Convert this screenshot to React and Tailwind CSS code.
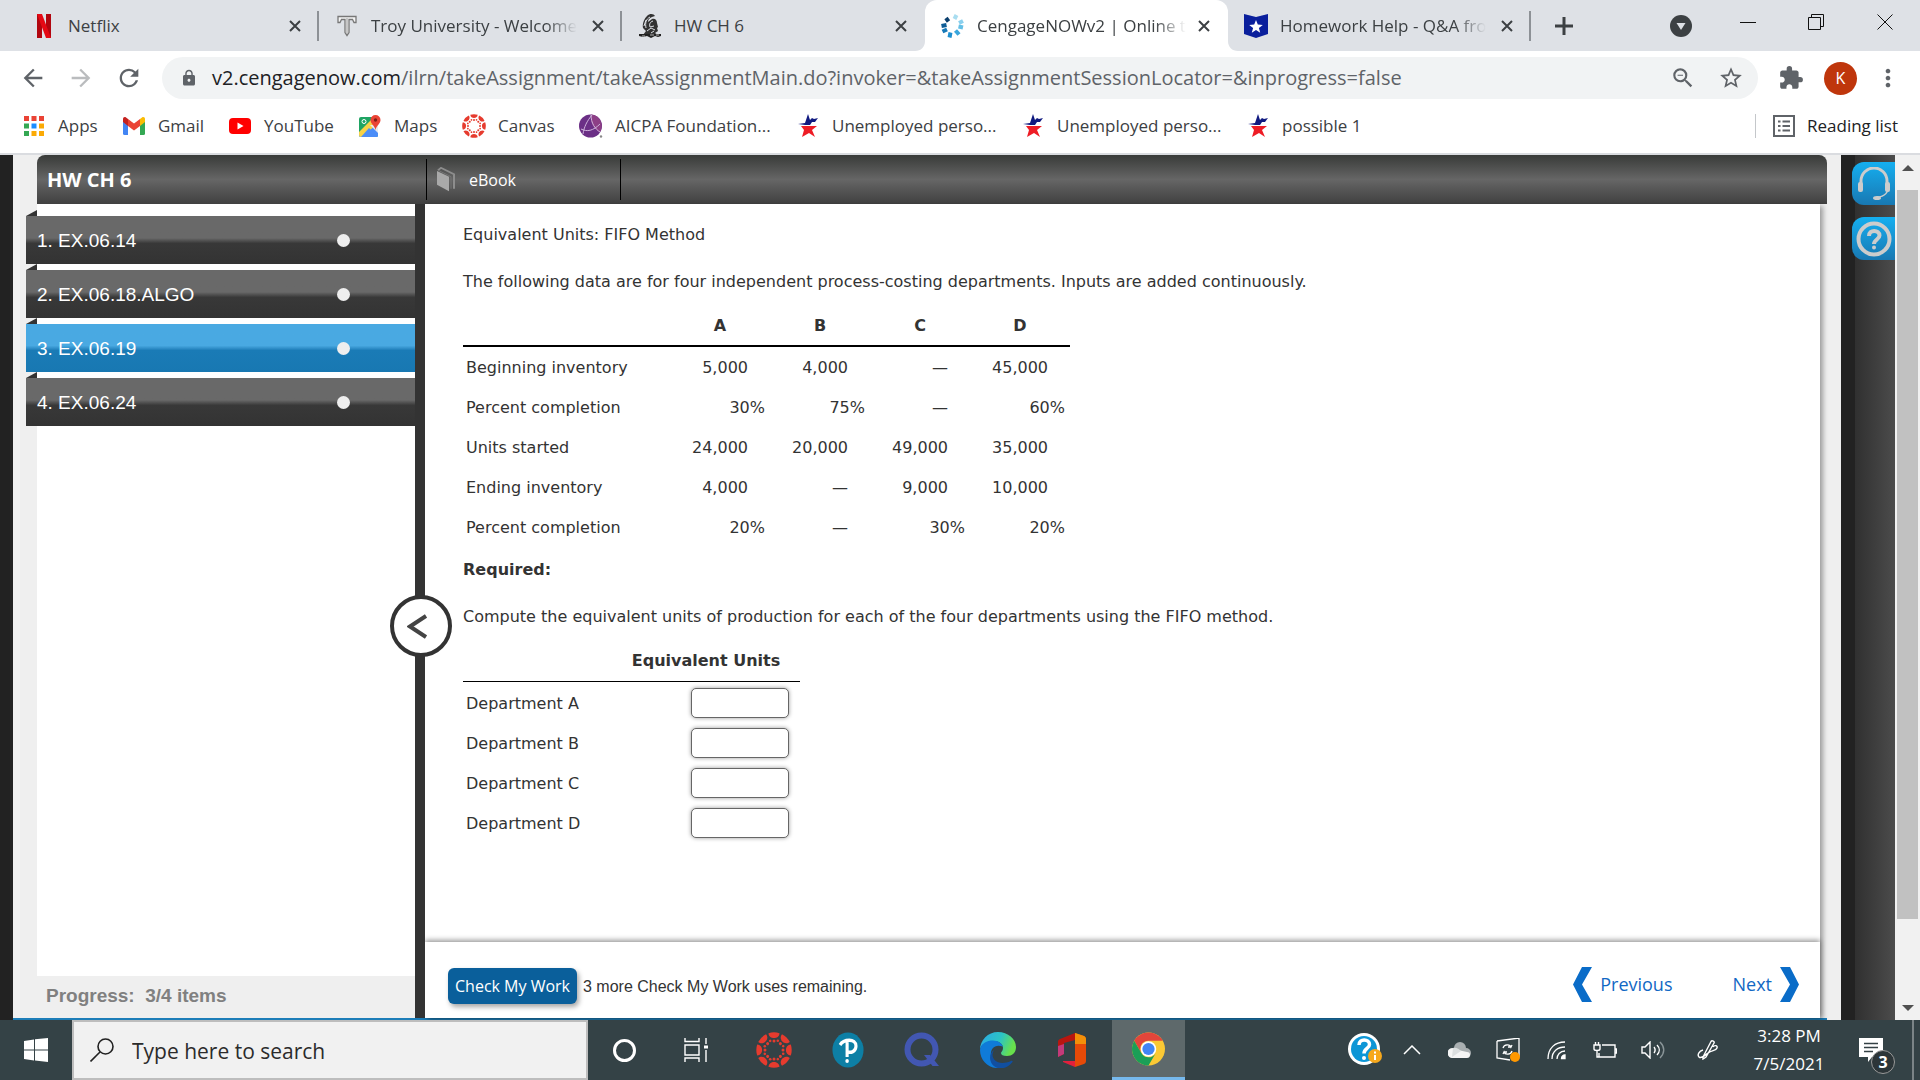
import React from 'react';
import {
  MdArrowBack,
  MdArrowForward,
  MdRefresh,
  MdLock,
  MdZoomOut,
  MdStarBorder,
  MdExtension,
  MdMoreVert,
} from 'react-icons/md';

/* ---------- Site icons ---------- */

const NetflixIcon = () => (
  <svg viewBox="0 0 14 24" className="w-[14px] h-6">
    <path d="M0 0h5v24H0zM9 0h5v24H9z" fill="#b1060f" />
    <path d="M0 0h5l9 24H9z" fill="#e50914" />
  </svg>
);

const TroyIcon = () => (
  <svg viewBox="0 0 20 22" className="w-5 h-[22px]">
    <path
      d="M1 1.500h18v6h-2l-1.500-3H12v13L10 20.500 8 17.500v-13H4.500L3 7.500H1z"
      fill="#f4f4f4"
      stroke="#777"
      strokeWidth="1.300"
    />
    <path d="M10 3v16" stroke="#999" />
  </svg>
);

const TrojanIcon = () => (
  <svg viewBox="0 0 24 24" className="w-6 h-6">
    <path d="M9 2c3-3 7-2 8 0l-3 1c-3 1-4 3-4 5l4-3c3-1 5 1 5 4l1 4-1 1 1 3-3 2 3 2H5l3-4-3-3c-1-4 1-9 4-12z" fill="#333" />
    <path d="M12 3C8 5 7 9 8 14M15 7c-3 1-4 3-3 6l4-1M9 17l4-3 4 2M13 19l3-2M8 6l-2 6" stroke="#dee1e6" strokeWidth="1" fill="none" />
    <path d="M1 20h22v2l-3 1-3-1-4 2-4-2-4 1-4-1z" fill="#222" />
    <path d="M4 22h3M12 21h4M18 21h3" stroke="#ddd" strokeWidth=".8" />
  </svg>
);

const CengageIcon = () => (
  <svg viewBox="0 0 24 24" className="w-6 h-6">
    <g strokeWidth="4" strokeLinecap="butt">
      <path d="M13.500 5l2-4" stroke="#a9ddf0" />
      <path d="M18 9l4-2" stroke="#8ad0ee" />
      <path d="M17.500 12.500l4.500 1" stroke="#63bfe6" />
      <path d="M14.500 16.500l3.500 4" stroke="#3aa6dc" />
      <path d="M9.500 18.500l-1 5" stroke="#1d8fd0" />
      <path d="M6 15.500l-4.500 2" stroke="#1679b8" />
      <path d="M5.500 11l-5 1" stroke="#0e5c95" />
      <path d="M7.500 7.500L5 4" stroke="#0b3f6d" />
    </g>
  </svg>
);

const BadgeIcon = () => (
  <svg viewBox="0 0 24 24" className="w-6 h-6">
    <path d="M0 0l12 3 12-3v20l-12 4-12-4z" fill="#0a1f9c" />
    <path d="M12 6l1.800 4.600 5 .3-3.900 3.100 1.300 4.800-4.200-2.700-4.200 2.700 1.300-4.800-3.900-3.100 5-.3z" fill="#fff" />
  </svg>
);

const AppsIcon = () => (
  <svg viewBox="0 0 20 20" className="w-5 h-5">
    <path d="M0 0h5v5H0zM7.500 0h5v5h-5zM15 0h5v5h-5z" fill="#ea4335" />
    <path d="M0 7.500h5v5H0zM0 15h5v5H0z" fill="#34a853" />
    <path d="M7.500 7.500h5v5h-5z" fill="#1a8cff" />
    <path d="M15 7.500h5v5h-5zM7.500 15h5v5h-5zM15 15h5v5h-5z" fill="#fbaa05" />
  </svg>
);

const GmailIcon = () => (
  <svg viewBox="0 0 22 18" className="w-[22px] h-[18px]">
    <path d="M0 3h5v15H1.500A1.500 1.500 0 010 16.500z" fill="#4285f4" />
    <path d="M17 3h5v13.500a1.500 1.500 0 01-1.500 1.500H17z" fill="#34a853" />
    <path d="M17 2l2-1.500c1.500-1 3 0 3 1.500v3l-5 4z" fill="#fbbc04" />
    <path d="M5 2L3 .500C1.500-.500 0 .500 0 2v3l5 4z" fill="#c5221f" />
    <path d="M5 2l6 4.500L17 2v7l-6 4.500L5 9z" fill="#ea4335" />
  </svg>
);

const YouTubeIcon = () => (
  <svg viewBox="0 0 22 16" className="w-[22px] h-4">
    <rect width="22" height="16" rx="4" fill="#f00" />
    <path d="M8.500 4.500v7l6-3.500z" fill="#fff" />
  </svg>
);

const MapsIcon = () => (
  <svg viewBox="0 0 22 22" className="w-[22px] h-[22px]">
    <rect y="2" width="19" height="20" rx="2" fill="#1fa463" />
    <path d="M0 20L11 9l8 8v3a2 2 0 01-2 2H2a2 2 0 01-2-2z" fill="#4b8df8" />
    <path d="M0 17l13-13 5 5L3 22H2a2 2 0 01-2-2z" fill="#f7d247" />
    <path d="M10 13l9 9H2z" fill="#4b8df8" />
    <path d="M11 10l8 8v-8z" fill="#e8eaed" />
    <circle cx="5" cy="6.500" r="2" fill="none" stroke="#fff" />
    <path d="M16.500 0a5 5 0 015 5c0 4-4 5-5 10-1-5-5-6-5-10a5 5 0 015-5z" fill="#ea4335" />
    <circle cx="16.500" cy="5" r="1.700" fill="#7d1d15" />
  </svg>
);

const CanvasIcon = ({ className }) => (
  <svg viewBox="0 0 36 36" className={className}>
    {[0, 45, 90, 135, 180, 225, 270, 315].map((angle) => (
      <g key={angle} transform={`rotate(${angle} 18 18)`} fill="#e63b2e">
        <path d="M12.500 1.200a17.500 17.500 0 0111 0c-.4 6.500-10.600 6.500-11 0z" />
        <circle cx="18" cy="9" r="1.500" />
        <circle cx="21.800" cy="8.800" r="1.300" />
      </g>
    ))}
  </svg>
);

const AicpaIcon = () => (
  <svg viewBox="0 0 24 24" className="w-6 h-6">
    <circle cx="11.500" cy="12" r="11.500" fill="#6b2f86" />
    <path d="M12 .5A11.500 11.500 0 0121 18C15 16 11 9 12 .5z" fill="#8d3f86" />
    <path d="M13 1C8 7 5 13 4 20M12 1c0 8 4 14 9 17M2 15c6 3 12 2 19-5" stroke="#cfb4dc" strokeWidth="1" fill="none" />
    <circle cx="22" cy="22.500" r="1.200" fill="#888" />
  </svg>
);

const TexasIcon = () => (
  <svg viewBox="0 0 20 24" className="w-5 h-6">
    <path d="M0 10l7-1 3-9 2 6 2-2 2 1 4-1-3 4h-3l-2 3H7z" fill="#101a80" />
    <path d="M3 12h16l-5 4 3 7-6-4-7 4 2-7z" fill="#ee1c25" />
  </svg>
);

const ReadingListIcon = () => (
  <svg viewBox="0 0 22 22" className="w-[22px] h-[22px]">
    <rect x="1" y="1" width="20" height="20" fill="none" stroke="#5f6368" strokeWidth="2" />
    <path d="M5 6.500h2.500M5 11h2.500M5 15.500h2.500M9.500 6.500H17M9.500 11H17M9.500 15.500H17" stroke="#5f6368" strokeWidth="2" />
  </svg>
);

const CloseIcon = () => (
  <svg viewBox="0 0 12 12" className="w-3 h-3">
    <path d="M1 1l10 10M11 1L1 11" stroke="#3c4043" strokeWidth="2" />
  </svg>
);

/* ---------- Browser chrome ---------- */

const tabs = [
  { title: 'Netflix', icon: NetflixIcon, separator: true },
  { title: 'Troy University - Welcome', icon: TroyIcon, separator: true },
  { title: 'HW CH 6', icon: TrojanIcon },
  { title: 'CengageNOWv2 | Online t', icon: CengageIcon, active: true },
  { title: 'Homework Help - Q&A fro', icon: BadgeIcon, separator: true },
];

const TabFoot = ({ className }) => (
  <svg viewBox="0 0 10 10" className={className}>
    <path d="M10 0v10H0C6 10 10 6 10 0z" fill="#fff" />
  </svg>
);

const TabStrip = () => (
  <div className="flex h-[51px] bg-[#dee1e6] pl-4">
    {tabs.map(({ title, icon: Icon, active, separator }) => (
      <div
        key={title}
        className={
          active
            ? 'relative flex items-center w-[303px] shrink-0 bg-white rounded-t-xl pl-4'
            : 'flex items-center w-[303px] shrink-0 pl-4'
        }
      >
        {active && (
          <>
            <TabFoot className="absolute bottom-0 -left-[10px] w-[10px] h-[10px]" />
            <TabFoot className="absolute bottom-0 -right-[10px] w-[10px] h-[10px] -scale-x-100" />
          </>
        )}
        <div className="w-6 flex justify-center shrink-0">
          <Icon />
        </div>
        <span
          className={
            title.length > 20
              ? 'ml-3 whitespace-nowrap text-[17px] text-[#3c4043] mask-r-from-85%'
              : 'ml-3 whitespace-nowrap text-[17px] text-[#3c4043]'
          }
        >
          {title}
        </span>
        <button aria-label={`Close ${title}`} className="ml-auto">
          <CloseIcon />
        </button>
        <div
          className={separator ? 'w-[2px] h-[30px] bg-[#8d9196] ml-4' : 'w-[2px] h-[30px] ml-4'}
        />
      </div>
    ))}
    <button aria-label="New tab" className="ml-6">
      <svg viewBox="0 0 18 18" className="w-[18px] h-[18px]">
        <path d="M9 0v18M0 9h18" stroke="#3c4043" strokeWidth="3" />
      </svg>
    </button>
    <div className="ml-auto flex items-center">
      <button aria-label="Search tabs" className="mr-12">
        <svg viewBox="0 0 22 22" className="w-[22px] h-[22px]">
          <circle cx="11" cy="11" r="11" fill="#3c4043" />
          <path d="M6.500 8h9L11 15z" fill="#dee1e6" />
        </svg>
      </button>
      <button aria-label="Minimize" className="mr-[52px] mb-2">
        <svg viewBox="0 0 16 16" className="w-4 h-4">
          <path d="M0 8.500h16" stroke="#111" />
        </svg>
      </button>
      <button aria-label="Restore" className="mr-[53px] mb-2">
        <svg viewBox="0 0 16 16" className="w-4 h-4" fill="none" stroke="#111">
          <path d="M.5 3.500h12v12H.500zM3.500 3.500v-3h12v12h-3" />
        </svg>
      </button>
      <button aria-label="Close window" className="mr-[27px] mb-2">
        <svg viewBox="0 0 16 16" className="w-4 h-4">
          <path d="M.5.500l15 15M15.500.500l-15 15" stroke="#111" />
        </svg>
      </button>
    </div>
  </div>
);

const AddressBar = () => (
  <div className="flex items-center h-[54px] text-[#5f6368]">
    <button aria-label="Back" className="ml-[19px]">
      <MdArrowBack className="w-7 h-7" />
    </button>
    <button aria-label="Forward" className="ml-5 text-[#babcbe]">
      <MdArrowForward className="w-7 h-7" />
    </button>
    <button aria-label="Reload" className="ml-5">
      <MdRefresh className="w-7 h-7" />
    </button>
    <div className="flex-1 flex items-center ml-[19px] h-[42px] rounded-full bg-[#f1f3f4] pl-[18px] pr-[14px]">
      <MdLock className="w-[18px] h-[18px]" />
      <div className="ml-[14px] flex-1 text-xl whitespace-nowrap">
        <span className="text-[#202124]">v2.cengagenow.com</span>
        /ilrn/takeAssignment/takeAssignmentMain.do?invoker=&amp;takeAssignmentSessionLocator=&amp;inprogress=false
      </div>
      <button aria-label="Zoom">
        <MdZoomOut className="w-[26px] h-[26px]" />
      </button>
      <button aria-label="Bookmark this page" className="ml-[22px]">
        <MdStarBorder className="w-[26px] h-[26px]" />
      </button>
    </div>
    <button aria-label="Extensions" className="ml-5">
      <MdExtension className="w-[26px] h-[26px]" />
    </button>
    <button className="ml-5 w-[33px] h-[33px] rounded-full bg-[#bf360c] text-white text-base">K</button>
    <button aria-label="Menu" className="ml-[17px] mr-[18px]">
      <MdMoreVert className="w-7 h-7" />
    </button>
  </div>
);

const bookmarks = [
  { label: 'Apps', icon: <AppsIcon />, width: 'w-[100px]' },
  { label: 'Gmail', icon: <GmailIcon />, width: 'w-[106px]' },
  { label: 'YouTube', icon: <YouTubeIcon />, width: 'w-[130px]' },
  { label: 'Maps', icon: <MapsIcon />, width: 'w-[104px]' },
  { label: 'Canvas', icon: <CanvasIcon className="w-6 h-6" />, width: 'w-[117px]' },
  { label: 'AICPA Foundation...', icon: <AicpaIcon />, width: 'w-[217px]' },
  { label: 'Unemployed perso...', icon: <TexasIcon />, width: 'w-[225px]' },
  { label: 'Unemployed perso...', icon: <TexasIcon />, width: 'w-[225px]' },
  { label: 'possible 1', icon: <TexasIcon />, width: 'w-[120px]' },
];

const BookmarksBar = () => (
  <div className="flex items-center h-[50px] pb-[7px] px-[22px] border-b-2 border-[#dadce0] text-[17px] text-[#3c4043]">
    {bookmarks.map(({ label, icon, width }, i) => (
      <a key={i} href="#" className={`flex items-center shrink-0 whitespace-nowrap ${width}`}>
        <span className="w-6 mr-3 flex justify-center">{icon}</span>
        {label}
      </a>
    ))}
    <a href="#" className="ml-auto flex items-center h-6 border-l border-[#c4c7ca] pl-[17px] text-[#202124]">
      <ReadingListIcon />
      <span className="ml-3">Reading list</span>
    </a>
  </div>
);

/* ---------- Assignment ---------- */

const BookIcon = () => (
  <svg viewBox="0 0 18 31" className="w-[18px] h-[25px]" preserveAspectRatio="none">
    <path d="M0 5l12 7v18L0 22z" fill="#a9a9a9" />
    <path d="M1 4l3-3 13 8v18" fill="none" stroke="#8d8d8d" strokeWidth="2" />
    <path d="M1 4l13 8v15" fill="none" stroke="#777" strokeWidth="1" />
  </svg>
);

const items = [
  { label: '1. EX.06.14' },
  { label: '2. EX.06.18.ALGO' },
  { label: '3. EX.06.19', current: true },
  { label: '4. EX.06.24' },
];

const Sidebar = () => (
  <aside className="w-[402px] shrink-0 flex flex-col pl-6">
    <nav className="flex-1 bg-white pt-[6px]">
      {items.map(({ label, current }) => (
        <div key={label} className="-ml-[11px]">
          <svg viewBox="0 0 11 6" className="w-[11px] h-[6px]">
            <path d="M0 6l11-6v6z" fill="#333" />
          </svg>
          <button
            className={
              current
                ? 'flex items-center w-full h-[48px] pl-[11px] text-left text-[19px] text-white font-[Liberation_Sans,sans-serif] bg-linear-to-b from-[#49a9e2] from-45% via-[#1a7bb6] via-55% to-[#1878b2]'
                : 'flex items-center w-full h-[48px] pl-[11px] text-left text-[19px] text-white font-[Liberation_Sans,sans-serif] bg-linear-to-b from-[#696969] from-46% via-[#383838] via-57% to-[#333]'
            }
          >
            <span className="flex-1 pt-[3px]">{label}</span>
            <span className="w-[13px] h-[13px] rounded-full bg-[#eee] mr-[65px]" />
          </button>
        </div>
      ))}
    </nav>
    <div className="h-[42px] pl-[9px] text-[19px] leading-10 font-bold text-[#808080] font-[Liberation_Sans,sans-serif]">
      Progress: &nbsp;3/4 items
    </div>
  </aside>
);

const Splitter = () => (
  <div className="relative w-[10px] shrink-0 bg-[#333]">
    <button
      aria-label="Collapse list"
      className="absolute top-[391px] -left-[25px] w-[62px] h-[62px] rounded-full border-4 border-[#333] bg-white flex items-center justify-center z-10"
    >
      <svg viewBox="0 0 20 25" className="w-5 h-[25px] mr-2">
        <path d="M19 2L3 12.500 19 23" fill="none" stroke="#444" strokeWidth="4" />
      </svg>
    </button>
  </div>
);

const departments = ['A', 'B', 'C', 'D'];

const rows = [
  ['Beginning inventory', '5,000', '4,000', '—', '45,000'],
  ['Percent completion', '30%', '75%', '—', '60%'],
  ['Units started', '24,000', '20,000', '49,000', '35,000'],
  ['Ending inventory', '4,000', '—', '9,000', '10,000'],
  ['Percent completion', '20%', '—', '30%', '20%'],
];

const DataTable = () => (
  <table className="w-[607px] table-fixed">
    <thead>
      <tr className="h-10 border-b-2 border-black">
        <th className="w-[207px]" />
        {departments.map((d) => (
          <th key={d}>{d}</th>
        ))}
      </tr>
    </thead>
    <tbody>
      {rows.map(([label, ...values], i) => (
        <tr key={i} className="h-10">
          <td className="pl-[3px] pt-[3px]">{label}</td>
          {values.map((value, j) => (
            <td
              key={j}
              className={value.endsWith('%') ? 'text-right pt-[3px] pr-[5px]' : 'text-right pt-[3px] pr-[22px]'}
            >
              {value}
            </td>
          ))}
        </tr>
      ))}
    </tbody>
  </table>
);

const AnswerTable = () => (
  <table className="w-[337px] table-fixed">
    <thead>
      <tr className="h-10 border-b border-black">
        <th className="w-[149px]" />
        <th>Equivalent Units</th>
      </tr>
    </thead>
    <tbody>
      {departments.map((d) => (
        <tr key={d} className="h-10">
          <td className="pl-[3px] pt-[5px]">
            <label htmlFor={`dept-${d}`}>Department {d}</label>
          </td>
          <td className="text-right pt-[3px] pr-[11px]">
            <input
              id={`dept-${d}`}
              type="text"
              className="block ml-auto w-[98px] h-[30px] px-2 rounded-[5px] border border-[#666] bg-white shadow-[0_0_4px_rgba(0,0,0,0.4)]"
            />
          </td>
        </tr>
      ))}
    </tbody>
  </table>
);

const Question = () => (
  <div className="flex-1 px-[38px] pt-[19px] text-base leading-6 text-[#333] font-[DejaVu_Sans,Verdana,sans-serif]">
    <p>Equivalent Units: FIFO Method</p>
    <p className="mt-[23px] mb-3">
      The following data are for four independent process-costing departments. Inputs are added continuously.
    </p>
    <DataTable />
    <p className="mt-3 font-bold">Required:</p>
    <p className="mt-[23px] mb-3">
      Compute the equivalent units of production for each of the four departments using the FIFO method.
    </p>
    <AnswerTable />
  </div>
);

const QuestionFooter = () => (
  <div className="flex items-center h-[76px] pl-[23px] pr-[21px] bg-white shadow-[0_-2px_5px_rgba(0,0,0,0.4)]">
    <button className="h-9 px-[7px] rounded-md bg-[#0a5f9b] text-white text-base whitespace-nowrap shadow-[2px_3px_5px_rgba(0,0,0,0.35)] mt-[12px]">
      Check My Work
    </button>
    <span className="ml-[6px] mt-[14px] text-base text-[#333] font-[Liberation_Sans,sans-serif]">
      3 more Check My Work uses remaining.
    </span>
    <div className="ml-auto mt-2 flex items-center text-lg text-[#1168c4]">
      <a href="#" className="flex items-center">
        <svg viewBox="0 0 19 35" className="w-[19px] h-[35px] mr-2">
          <path d="M9 0h10L9 17.500 19 35H9L0 17.500z" fill="#0a6cc8" />
        </svg>
        Previous
      </a>
      <a href="#" className="flex items-center ml-[60px]">
        Next
        <svg viewBox="0 0 19 35" className="w-[19px] h-[35px] ml-2">
          <path d="M10 0H0l10 17.500L0 35h10l9-17.500z" fill="#0a6cc8" />
        </svg>
      </a>
    </div>
  </div>
);

const SideTools = () => (
  <div className="w-[40px] bg-linear-to-r from-[#303030] to-[#4c4c4c] flex flex-col items-end gap-3 pt-[7px]">
    <button
      aria-label="Support"
      className="w-[43px] h-[43px] -ml-[3px] shrink-0 rounded-l-xl bg-linear-to-b from-[#14aff0] to-[#1878b2] flex items-center justify-center"
    >
      <svg viewBox="0 0 34 34" className="w-[34px] h-[34px]" fill="none" stroke="#ccc">
        <path d="M4 17v-3a13 13 0 0126 0v3" strokeWidth="3" />
        <path d="M31 18c1 7-3 12-11 12" strokeWidth="1.500" />
        <rect x="1" y="15" width="5" height="10" rx="2" fill="#ccc" stroke="none" />
        <rect x="28" y="15" width="5" height="10" rx="2" fill="#ccc" stroke="none" />
        <ellipse cx="20" cy="31" rx="4" ry="2" fill="#ccc" stroke="none" />
      </svg>
    </button>
    <button
      aria-label="Help"
      className="w-[43px] h-[43px] -ml-[3px] shrink-0 rounded-l-xl bg-linear-to-b from-[#14aff0] to-[#1878b2] flex items-center justify-center"
    >
      <svg viewBox="0 0 36 36" className="w-9 h-9" fill="none" stroke="#ccc" strokeWidth="4">
        <circle cx="18" cy="18" r="15.500" />
        <path d="M13 15c0-7 10.500-6.500 10.500-.500 0 4-5.500 4-5.500 8.500" />
        <circle cx="18" cy="26.500" r="2" fill="#ccc" stroke="none" />
      </svg>
    </button>
  </div>
);

const Scrollbar = () => (
  <div className="w-[25px] flex flex-col items-center bg-[#f1f1f1]">
    <svg viewBox="0 0 12 6" className="w-3 h-[6px] mt-[10px]">
      <path d="M0 6l6-6 6 6z" fill="#505050" />
    </svg>
    <div className="w-[21px] mt-[19px] mb-[86px] flex-1 bg-[#c1c1c1]" />
    <svg viewBox="0 0 12 6" className="w-3 h-[6px] mb-[9px]">
      <path d="M0 0l6 6 6-6z" fill="#505050" />
    </svg>
  </div>
);

const Assignment = () => (
  <div className="flex flex-1 bg-[#efefef]">
    <div className="w-[13px] bg-[#222]" />
    <div className="flex-1 flex flex-col mr-[14px] border-b-2 border-[#1c7db8]">
      <header className="ml-6 flex h-[49px] rounded-t-lg text-white bg-linear-to-b from-[#393b39] via-[#666] to-[#404040]">
        <h1 className="w-[389px] pl-[10px] text-xl leading-[49px] font-bold">HW CH 6</h1>
        <button className="flex items-center w-[195px] my-1 pl-[10px] border-x border-black text-base">
          <BookIcon />
          <span className="ml-[14px]">eBook</span>
        </button>
      </header>
      <div className="flex-1 flex">
        <Sidebar />
        <Splitter />
        <main className="flex-1 flex flex-col mr-[7px] bg-white shadow-[3px_2px_5px_rgba(0,0,0,0.35)]">
          <Question />
          <QuestionFooter />
        </main>
      </div>
    </div>
    <div className="w-[14px] bg-[#222]" />
    <SideTools />
    <Scrollbar />
  </div>
);

/* ---------- Taskbar ---------- */

const PearsonIcon = () => (
  <svg viewBox="0 0 36 36" className="w-8 h-9" preserveAspectRatio="none">
    <ellipse cx="18" cy="18" rx="17.500" ry="17.500" fill="#0d7fa5" />
    <path d="M9 13c4-6 18-7 18 1 0 6-6 7-10 6M17 10v15" fill="none" stroke="#fff" strokeWidth="3.500" />
    <circle cx="17" cy="29" r="2" fill="#fff" />
  </svg>
);

const QuizletIcon = () => (
  <svg viewBox="0 0 36 36" className="w-9 h-9" fill="none" stroke="#4257b2" strokeWidth="6">
    <circle cx="17.500" cy="17.500" r="14" />
    <path d="M20 23h6l9 11h-6.500z" fill="#4257b2" stroke="none" />
  </svg>
);

const EdgeIcon = () => (
  <svg viewBox="0 0 36 36" className="w-9 h-9">
    <defs>
      <linearGradient id="edgeTop" x1="0" y1="0" x2="1" y2="0.300">
        <stop offset="0" stopColor="#2aa8e8" />
        <stop offset=".6" stopColor="#2cc4c4" />
        <stop offset="1" stopColor="#68e04c" />
      </linearGradient>
    </defs>
    <path d="M0 18C0 8 8 0 18 0s18 7 18 15c0 6-4 9-9 9-4 0-6-1-6-3 0-1 2-2 2-5 0-4-4-7-9-7C7 9 1 12 0 18z" fill="url(#edgeTop)" />
    <path d="M0 18C1 11 7 8.500 13 8.500c5 0 9 3 10 6-9-3-13 3-12 10 1 5 4 9 9 11.500C9 37 0 29 0 18z" fill="#0f7bd8" />
    <path d="M14 18c-5 8 3 17 17 11 1-.5 2 0 1.500 1C28 36 22 37 18 36c-8-2-11-13-4-18z" fill="#114fa0" />
  </svg>
);

const OfficeIcon = () => (
  <svg viewBox="0 0 28 36" className="w-7 h-9">
    <path d="M17 1L2 7C0 8 0 9 0 10v15l6-3V11l11-3z" fill="#b9160f" />
    <path d="M0 14v11l6-3V12z" fill="#c43a7a" />
    <path d="M17 1l9 3c1 .5 2 1.500 2 3v22c0 1.500-1 2.500-2 3l-9 3z" fill="#e64a08" />
    <path d="M17 1l9 3c1 .5 2 1.500 2 3v5H17z" fill="#f39009" />
    <path d="M5 29h12v6L5 30z" fill="#e2203c" />
  </svg>
);

const ChromeIcon = () => (
  <svg viewBox="0 0 34 34" className="w-[33px] h-[34px]">
    <circle cx="17" cy="17" r="17" fill="#fbc934" />
    <path d="M2.300 8.500a17 17 0 0129.400 0H17a8.500 8.500 0 00-7.400 12.700z" fill="#e2453b" />
    <path d="M2.300 8.500a17 17 0 0014.700 25.500l7.400-12.700A8.500 8.500 0 019.600 21.200z" fill="#1b9f57" />
    <circle cx="17" cy="17" r="8" fill="#fff" />
    <circle cx="17" cy="17" r="6.300" fill="#4285f4" />
  </svg>
);

const TaskViewIcon = () => (
  <svg viewBox="0 0 24 24" className="w-6 h-6" fill="none" stroke="#fff" strokeWidth="1.400">
    <path d="M1 0v3.500h14V0M1 24v-4h14v4M1 7h14v10H1zM22 0v6M22 12v12" />
    <path d="M20 7.500h4v3h-4z" fill="#fff" stroke="none" />
  </svg>
);

const pinned = [
  { name: 'Cortana', width: 'w-[72px]', icon: <span className="w-[23px] h-[23px] rounded-full border-[3px] border-white" /> },
  { name: 'Task View', width: 'w-[72px]', icon: <TaskViewIcon /> },
  { name: 'Canvas', width: 'w-[84px]', icon: <CanvasIcon className="w-9 h-9" /> },
  { name: 'Pearson', width: 'w-[64px]', icon: <PearsonIcon /> },
  { name: 'Quizlet', width: 'w-[84px]', icon: <QuizletIcon /> },
  { name: 'Edge', width: 'w-[68px]', icon: <EdgeIcon /> },
  { name: 'Office', width: 'w-[80px]', icon: <OfficeIcon /> },
];

const Tray = () => (
  <div className="ml-auto flex items-center text-white">
    <button aria-label="Get help">
      <svg viewBox="0 0 34 34" className="w-[34px] h-[34px]">
        <circle cx="16" cy="16" r="16" fill="#fff" />
        <circle cx="16" cy="16" r="13" fill="#0d96d6" />
        <path d="M11 12c0-7 10.500-6.500 10.500-.500 0 4-5.500 4-5.500 9" fill="none" stroke="#fff" strokeWidth="3.500" />
        <circle cx="16" cy="25" r="2" fill="#fff" />
        <circle cx="27" cy="23" r="7" fill="#f6a81c" />
        <path d="M27 22v5M27 18.500v2" stroke="#fff" strokeWidth="2" />
      </svg>
    </button>
    <button aria-label="Show hidden icons" className="ml-[21px]">
      <svg viewBox="0 0 18 10" className="w-[18px] h-[10px]">
        <path d="M1 9l8-8 8 8" fill="none" stroke="#fff" strokeWidth="1.500" />
      </svg>
    </button>
    <svg viewBox="0 0 24 16" className="w-6 h-4 ml-[27px]">
      <path d="M6 6a6 6 0 0112 0 5 5 0 015 5c0 1-.500 2-1 3L10 8z" fill="#a9afb1" />
      <path d="M5 16a5 5 0 01-1-10c3 0 4 1 6 2l9 2a3 3 0 010 6z" fill="#f5f5f5" />
      <path d="M5 6c3-1 6 1 8 3l-9 6z" fill="#dcdfe0" />
    </svg>
    <svg viewBox="0 0 24 24" className="w-6 h-6 ml-6" fill="none" stroke="#fff" strokeWidth="1.300">
      <path d="M1 3l22-3v19M1 3v17l13 2M23 0v14" />
      <path d="M7 10c1-4 7-4 8-1l1-2M15 9h-3M16 13c-1 4-7 4-8 1l-1 2M8 14h3" />
      <circle cx="19" cy="19" r="5" fill="#ff9800" stroke="none" />
    </svg>
    <svg viewBox="0 0 20 20" className="w-5 h-5 ml-[27px]" fill="none" stroke="#fff" strokeWidth="1.300">
      <path d="M1 19C1 8 8 2 18 2M5 19C5 11 11 7 18 7M10 19c0-4 3-8 8-8" />
      <path d="M14.500 18.500a3.500 3.500 0 013.500-3.500v3.500z" fill="#fff" />
    </svg>
    <svg viewBox="0 0 24 18" className="w-6 h-[18px] ml-[26px]" fill="none" stroke="#fff" strokeWidth="1.400">
      <path d="M9 4h13v12H6v-4M22.500 8h1v4h-1M1 4h6v4c0 2-6 2-6 0zM2.500 4V1M5.500 4V1M4 9v7h2" />
    </svg>
    <svg viewBox="0 0 24 18" className="w-6 h-[18px] ml-6" fill="none" stroke="#fff" strokeWidth="1.400">
      <path d="M1 6h3l5-5v16l-5-5H1zM13 6c1.500 2 1.500 4 0 6M16 4c3 3 3 7 0 10" />
      <path d="M19 1c5 5 5 11 0 16" stroke="#8a9598" />
    </svg>
    <svg viewBox="0 0 22 20" className="w-[22px] h-5 ml-8" fill="none" stroke="#fff" strokeWidth="1.400">
      <path d="M6 17L14 1.500c1-1.500 4 0 3 1.500L9 17l-3 2zM6 10c-4 1-6 5-4 7s5-1 9-4 8-2 9-5-3-3-4-1" />
    </svg>
    <div className="ml-[34px] w-[72px] text-center text-[17px] leading-7">
      <div>3:28 PM</div>
      <div>7/5/2021</div>
    </div>
    <button aria-label="3 notifications" className="relative ml-[34px] mr-[17px] w-9 h-11">
      <svg viewBox="0 0 24 24" className="w-6 h-6">
        <path d="M0 0h24v19H13l-4 5v-5H0z" fill="#fff" />
        <path d="M5 5.500h14M5 9.500h14M5 13.500h9" stroke="#344145" strokeWidth="1.300" />
      </svg>
      <span className="absolute left-3 top-[22px] w-6 h-6 rounded-full border border-[#999] bg-[#2c3538] text-base leading-[22px] font-bold">
        3
      </span>
    </button>
    <div className="w-[8px] h-[60px] border-l-2 border-[#7b8487]" />
  </div>
);

const Taskbar = () => (
  <footer className="flex items-center h-[60px] bg-[#344246]">
    <button aria-label="Start" className="w-[72px] flex justify-center">
      <svg viewBox="0 0 24 24" className="w-6 h-6" fill="#fff">
        <path d="M0 3l10-1.500v10H0zM11 1.300L24 0v11.500H11zM0 12.500h10v10L0 21zM11 12.500h13V24l-13-1.500z" />
      </svg>
    </button>
    <label className="flex items-center w-[516px] h-full border-2 border-[#bdbdbd] bg-[#f1f1f1] pl-4">
      <svg viewBox="0 0 24 24" className="w-6 h-6" fill="none" stroke="#222" strokeWidth="1.600">
        <circle cx="15.500" cy="8.500" r="7.500" />
        <path d="M10 14L.5 23.500" />
      </svg>
      <input
        type="text"
        aria-label="Search"
        placeholder="Type here to search"
        className="flex-1 ml-[18px] pt-1 bg-transparent text-[21px] placeholder:text-[#2b2b2b] outline-none"
      />
    </label>
    {pinned.map(({ name, width, icon }) => (
      <button key={name} aria-label={name} className={`flex items-center justify-center ${width}`}>
        {icon}
      </button>
    ))}
    <button
      aria-label="Chrome"
      className="flex items-center justify-center w-[73px] h-full bg-[#5e696b] border-b-[3px] border-[#76b9ed]"
    >
      <ChromeIcon />
    </button>
    <Tray />
  </footer>
);

const App = () => (
  <div className="min-h-screen flex flex-col bg-white font-[Open_Sans,Segoe_UI,sans-serif]">
    <TabStrip />
    <AddressBar />
    <BookmarksBar />
    <Assignment />
    <Taskbar />
  </div>
);

export default App;
